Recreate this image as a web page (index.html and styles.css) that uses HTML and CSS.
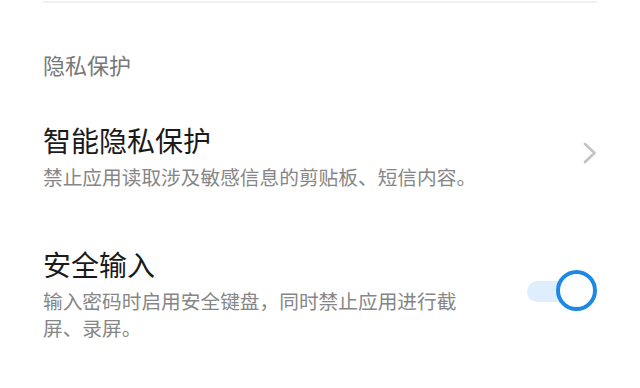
FILE: index.html
```html
<!DOCTYPE html>
<html lang="zh-CN">
<head>
    <meta charset="UTF-8">
    <meta name="viewport" content="width=device-width, initial-scale=1.0">
    <title>隐私保护</title>
    <link rel="stylesheet" href="styles.css">
</head>
<body>

    <div class="page">
        <div class="divider"></div>

        <div class="section-title">隐私保护</div>

        <div class="setting-row">
            <div class="setting-text">
                <div class="setting-name">智能隐私保护</div>
                <div class="setting-desc">禁止应用读取涉及敏感信息的剪贴板、短信内容。</div>
            </div>
            <svg class="chevron" width="14" height="22" viewBox="0 0 14 22">
                <path d="M2 2 L11.5 11 L2 20" fill="none" stroke="#c4c4c4" stroke-width="2.8" stroke-linecap="round" stroke-linejoin="round"/>
            </svg>
        </div>

        <div class="setting-row row-switch">
            <div class="setting-text narrow">
                <div class="setting-name">安全输入</div>
                <div class="setting-desc">输入密码时启用安全键盘，同时禁止应用进行截屏、录屏。</div>
            </div>
            <div class="switch">
                <div class="switch-track"></div>
                <div class="switch-knob"></div>
            </div>
        </div>
    </div>

</body>
</html>
```

FILE: styles.css
```css
body {
    margin: 0;
    background-color: #fff;
    font-family: "Noto Sans CJK SC", "Noto Sans", sans-serif;
}
.page {
    padding: 1px 43px 0 43px;
}
.divider {
    height: 2px;
    background-color: #f1f1f1;
}
.section-title {
    margin-top: 46px;
    font-size: 22px;
    line-height: 30px;
    color: #777;
}
.setting-row {
    display: flex;
    align-items: center;
    justify-content: space-between;
    margin-top: 43px;
}
.row-switch {
    margin-top: 56px;
}
.setting-text {
    flex: 1;
}
.setting-text.narrow {
    flex: 0 0 424px;
}
.setting-name {
    font-size: 28px;
    line-height: 36px;
    color: #1a1a1a;
}
.setting-desc {
    margin-top: 5px;
    font-size: 19.7px;
    line-height: 27px;
    color: #868686;
}
.chevron {
    display: block;
    margin-top: -6px;
}
.switch {
    position: relative;
    width: 70px;
    height: 42px;
    margin-top: -6px;
}
.switch-track {
    position: absolute;
    left: 0;
    top: 11px;
    width: 56px;
    height: 21px;
    border-radius: 11px;
    background-color: #deeefc;
}
.switch-knob {
    position: absolute;
    right: 0;
    top: 0;
    width: 33px;
    height: 33px;
    border: 4.5px solid #1e88e5;
    border-radius: 50%;
    background-color: #fff;
}
```
